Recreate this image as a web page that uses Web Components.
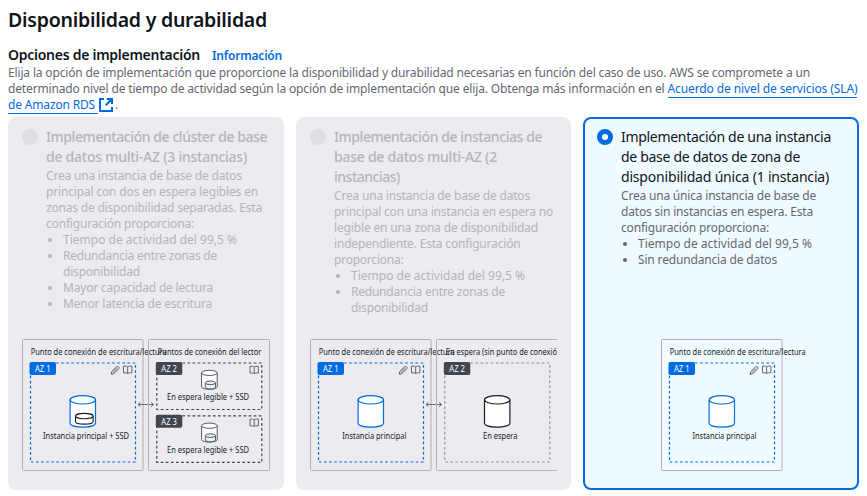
<!DOCTYPE html>
<html lang="es">
<head>
<meta charset="utf-8">
<title>Disponibilidad y durabilidad</title>
<style>
body{margin:0;background:#fff;font-family:"Noto Sans","Open Sans",sans-serif}
</style>
</head>
<body>
<availability-page></availability-page>
<script>
// One line of text whose tracking is adjusted to a given advance width.
class TextRun extends HTMLElement{
  connectedCallback(){
    if(this.shadowRoot)return;
    this.attachShadow({mode:'open'}).innerHTML=`<style>:host{display:inline-block;white-space:pre;vertical-align:top}span{display:inline-block}</style><span><slot></slot></span>`;
    const s=this.shadowRoot.querySelector('span'),w=+this.getAttribute('w');
    if(w){
      const n=this.textContent.length;
      s.style.letterSpacing=((w-s.getBoundingClientRect().width)/n).toFixed(4)+'px';
    }
  }
}
customElements.define('text-run',TextRun);

class ExternalLink extends HTMLElement{
  connectedCallback(){
    if(this.shadowRoot)return;
    this.attachShadow({mode:'open'}).innerHTML=`<style>:host{display:inline-flex;height:16px;color:#006ce0;border-bottom:1px solid #006ce0;box-sizing:content-box}</style><slot></slot>`;
  }
}
customElements.define('external-link',ExternalLink);

const label=(x,y,w,t)=>`<text x="${x}" y="${y}" textLength="${w}" lengthAdjust="spacingAndGlyphs">${t}</text>`;
const frame=(x,w)=>`<rect x="${x}" y=".5" width="${w}" height="131" rx="1" fill="none" stroke="#b0b0b8"/>`;
const zone=(x,y,h,t,c,d=c,sw=1.2)=>`<rect x="${x}" y="${y}" width="105" height="${h}" fill="none" stroke="${d}" stroke-width="${sw}" stroke-dasharray="2.7 2.4"/><rect x="${x-1}" y="${y-1}" width="26.5" height="13" rx="2" fill="${c}"/><text x="${x+4.5}" y="${y+8.7}" textLength="15.5" lengthAdjust="spacingAndGlyphs" fill="#fff">${t}</text>`;
const drum=(x,y,w,h,r,c,sw=1.2,f='#fff')=>`<path d="M${x} ${y+r}V${y+h-r}C${x} ${y+h+r*.32} ${x+w} ${y+h+r*.32} ${x+w} ${y+h-r}V${y+r}" fill="${f}" stroke="${c}" stroke-width="${sw}"/><ellipse cx="${x+w/2}" cy="${y+r}" rx="${w/2}" ry="${r}" fill="${f}" stroke="${c}" stroke-width="${sw}"/>`;
const pen=(x,y)=>`<g transform="translate(${x} ${y})" fill="none" stroke="#55555f"><path d="M.7 8.2 1.3 5.6 6.2.8Q7.2.1 8.1 1 8.9 1.9 8.2 2.8L3.3 7.6Z"/><path d="M2.6 6.3 6.6 2.4" stroke-width=".8"/></g>`;
const book=(x,y)=>`<path transform="translate(${x} ${y})" d="M4.7 1.4Q4 .6 3 .6H.5V7.3H3.2Q4.2 7.3 4.7 8.2Q5.2 7.3 6.2 7.3H8.9V.6H6.4Q5.4.6 4.7 1.4V8.2" fill="none" stroke="#656570" stroke-width="1"/>`;
const arrow=(x)=>`<path d="M${x} 65.5h15.5M${x+2.4} 63.2 ${x} 65.5l2.4 2.3M${x+13.1} 63.2l2.4 2.3-2.4 2.3" fill="none" stroke="#656570" stroke-width="1"/>`;
const BLUE='#006ce0',DARK='#424650';
const primary=(x,extra)=>frame(x,120.5)+zone(x+8,24,99,'AZ 1',BLUE)+pen(x+88,27)+book(x+100.5,26.5)+drum(x+47.6,56.6,25.4,31.5,4.2,BLUE)+label(x+8.2,16,136,'Punto de conexión de escritura/lectura')+extra;
const reader=(y,t)=>zone(134.8,y,46.5,t,DARK)+book(227.5,y+2.7)+drum(179.6,y+7.3,15.6,19,2.6,'#424650',.9)+drum(183.3,y+18,10.2,8,1.8,DARK,.9,'#e4f3f8')+label(145,y+37.2,82,'En espera legible + SSD');
const diagrams={
  cluster:primary(.5,drum(53.5,74.4,17.6,10.8,2.7,'#161d26',1.1)+label(21,100,86,'Instancia principal + SSD'))+arrow(116)+frame(126.5,121)+reader(24,'AZ 2')+reader(76.8,'AZ 3')+label(135.8,16,103.5,'Puntos de conexión del lector'),
  standby:primary(.5,label(32.3,100,64,'Instancia principal'))+arrow(116)+frame(126.5,150)+zone(134.8,24,99,'AZ 2',DARK,'#8c8c94',1.1)+drum(174.5,56.6,25.4,31.5,4.2,'#161d26')+label(135.8,16,118,'En espera (sin punto de conexión)')+label(173,100,34.5,'En espera'),
  single:primary(64.5,label(95.5,100,64,'Instancia principal'))
};
class AzDiagram extends HTMLElement{
  connectedCallback(){
    if(this.shadowRoot)return;
    const k=this.getAttribute('kind');
    this.attachShadow({mode:'open'}).innerHTML=`<style>:host{display:block;height:132px}svg{display:block;font-size:8px;fill:#161d26;overflow:${k==='standby'?'hidden':'visible'}}</style><svg width="${k==='standby'?247:248}" height="132">${diagrams[k]}</svg>`;
  }
}
customElements.define('az-diagram',AzDiagram);

class OptionTile extends HTMLElement{
  connectedCallback(){
    if(this.shadowRoot)return;
    this.attachShadow({mode:'open'}).innerHTML=`<style>
:host{display:flex;flex-direction:column;justify-content:space-between;box-sizing:border-box;height:373px;padding:8px 12px 17px;border:2px solid #ebebf0;border-radius:8px;background:#ebebf0;color:#b4b4bb}
:host([checked]){border-color:#006ce0;background:#f0fbff;color:#656871}
.top{display:grid;grid-template-columns:16px 1fr;column-gap:8px}
.dot{width:16px;height:16px;margin-top:2px;border-radius:50%;box-sizing:border-box;background:#dedee3}
:host([checked]) .dot{background:#fff;border:5px solid #006ce0}
.title{font-size:14px;line-height:20px;display:flex;flex-direction:column;align-items:flex-start;font-weight:500}
:host([checked]) .title{color:#0f141a;font-weight:400}
.text{padding-top:1px;font-size:12px;line-height:16px;display:flex;flex-direction:column;align-items:flex-start}
::slotted(az-diagram){flex:none}
</style><div class="top"><div class="dot"></div><div><div class="title"><slot name="title"></slot></div><div class="text"><slot></slot></div></div></div><slot name="diagram"></slot>`;
  }
}
customElements.define('option-tile',OptionTile);

class BulletItem extends HTMLElement{
  connectedCallback(){
    if(this.shadowRoot)return;
    this.attachShadow({mode:'open'}).innerHTML=`<style>:host{display:grid;grid-template-columns:17px auto}i{width:4px;height:4px;border-radius:50%;background:currentColor;margin:6px 0 0 2px}div{display:flex;flex-direction:column;align-items:flex-start}</style><i></i><div><slot></slot></div>`;
  }
}
customElements.define('bullet-item',BulletItem);

const run=(t,w,slot='')=>`<text-run w="${w}"${slot&&` slot="${slot}"`}>${t}</text-run>`;
const title=l=>l.map(([t,w])=>run(t,w,'title')).join('');
const lines=l=>l.map(([t,w])=>run(t,w)).join('');
const item=l=>`<bullet-item>${lines(l)}</bullet-item>`;

class AvailabilityPage extends HTMLElement{
  connectedCallback(){
    if(this.shadowRoot)return;
    this.attachShadow({mode:'open'}).innerHTML=`<style>
:host{display:block;box-sizing:border-box;width:867px;height:496px;padding:8px 8px 0;overflow:hidden;color:#656871}
h2{margin:0;font-size:19.5px;font-weight:600;line-height:24px;height:37px;color:#0f141a}
.head{display:flex;gap:12px;height:20px;line-height:20px;font-weight:600;font-size:14px;color:#0f141a}
.info{font-size:12px;color:#006ce0;line-height:22px}
.line{display:flex;height:16px;font-size:12px;line-height:16px}
.desc{height:52px}
svg{flex:none;margin:1px 1px 0 1px}
.tiles{display:grid;grid-template-columns:276px 275px 276px;gap:12px}
</style>
<h2>${run('Disponibilidad y durabilidad',259)}</h2>
<div class="head">${run('Opciones de implementación',192)}<span class="info">${run('Información',70)}</span></div>
<div class="desc">
<div class="line">${run('Elija la opción de implementación que proporcione la disponibilidad y durabilidad necesarias en función del caso de uso. AWS se compromete a un',802)}</div>
<div class="line">${run('determinado nivel de tiempo de actividad según la opción de implementación que elija. Obtenga más información en el ',659.5)}<external-link>${run('Acuerdo de nivel de servicios (SLA)',190)}</external-link></div>
<div class="line"><external-link>${run('de Amazon RDS ',90)}</external-link><svg width="15" height="15" fill="none" stroke="#006ce0" stroke-width="2"><path d="M5 1H1V13H13V9M7.8 1H13V6M13 1 6.8 7.2"/></svg>${run('.',3)}</div>
</div>
<div class="tiles">
<option-tile>${title([['Implementación de clúster de base',221],['de datos multi-AZ (3 instancias)',201]])}
${lines([['Crea una instancia de base de datos',196],['principal con dos en espera legibles en',212],['zonas de disponibilidad separadas. Esta',216],['configuración proporciona:',148]])}
${item([['Tiempo de actividad del 99,5 %',174]])}${item([['Redundancia entre zonas de',154],['disponibilidad',77]])}${item([['Mayor capacidad de lectura',150]])}${item([['Menor latencia de escritura',149]])}
<az-diagram slot="diagram" kind="cluster"></az-diagram></option-tile>
<option-tile>${title([['Implementación de instancias de',208],['base de datos multi-AZ (2',163],['instancias)',66]])}
${lines([['Crea una instancia de base de datos',196],['principal con una instancia en espera no',219],['legible en una zona de disponibilidad',204],['independiente. Esta configuración',186.5],['proporciona:',69.5]])}
${item([['Tiempo de actividad del 99,5 %',174]])}${item([['Redundancia entre zonas de',154],['disponibilidad',77]])}
<az-diagram slot="diagram" kind="standby"></az-diagram></option-tile>
<option-tile checked>${title([['Implementación de una instancia',210],['de base de datos de zona de',179],['disponibilidad única (1 instancia)',208]])}
${lines([['Crea una única instancia de base de',195],['datos sin instancias en espera. Esta',192],['configuración proporciona:',148]])}
${item([['Tiempo de actividad del 99,5 %',174]])}${item([['Sin redundancia de datos',139]])}
<az-diagram slot="diagram" kind="single"></az-diagram></option-tile>
</div>`;
  }
}
customElements.define('availability-page',AvailabilityPage);
</script>
</body>
</html>
